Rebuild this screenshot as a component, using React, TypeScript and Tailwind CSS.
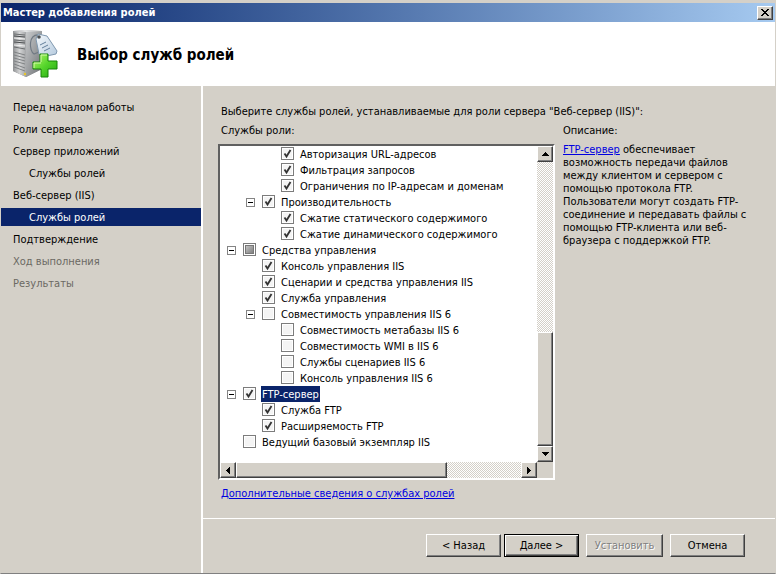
import { useState } from 'react';
import type { ReactNode } from 'react';
import clsx from 'clsx';

type CheckState = 'on' | 'off' | 'mixed';

interface Role {
  id: string;
  label: string;
  level: 0 | 1 | 2;
  state: CheckState;
  expandable?: boolean;
}

const steps = [
  { label: 'Перед началом работы' },
  { label: 'Роли сервера' },
  { label: 'Сервер приложений' },
  { label: 'Службы ролей', nested: true },
  { label: 'Веб-сервер (IIS)' },
  { label: 'Службы ролей', nested: true, current: true },
  { label: 'Подтверждение' },
  { label: 'Ход выполнения', disabled: true },
  { label: 'Результаты', disabled: true },
];

const initialRoles: Role[] = [
  { id: 'url-auth', label: 'Авторизация URL-адресов', level: 2, state: 'on' },
  { id: 'filtering', label: 'Фильтрация запросов', level: 2, state: 'on' },
  { id: 'ip-domains', label: 'Ограничения по IP-адресам и доменам', level: 2, state: 'on' },
  { id: 'performance', label: 'Производительность', level: 1, state: 'on', expandable: true },
  { id: 'static', label: 'Сжатие статического содержимого', level: 2, state: 'on' },
  { id: 'dynamic', label: 'Сжатие динамического содержимого', level: 2, state: 'on' },
  { id: 'tools', label: 'Средства управления', level: 0, state: 'mixed', expandable: true },
  { id: 'console', label: 'Консоль управления IIS', level: 1, state: 'on' },
  { id: 'scripts', label: 'Сценарии и средства управления IIS', level: 1, state: 'on' },
  { id: 'service', label: 'Служба управления', level: 1, state: 'on' },
  { id: 'compat', label: 'Совместимость управления IIS 6', level: 1, state: 'off', expandable: true },
  { id: 'metabase', label: 'Совместимость метабазы IIS 6', level: 2, state: 'off' },
  { id: 'wmi', label: 'Совместимость WMI в IIS 6', level: 2, state: 'off' },
  { id: 'scripts6', label: 'Службы сценариев IIS 6', level: 2, state: 'off' },
  { id: 'console6', label: 'Консоль управления IIS 6', level: 2, state: 'off' },
  { id: 'ftp', label: 'FTP-сервер', level: 0, state: 'on', expandable: true },
  { id: 'ftp-service', label: 'Служба FTP', level: 1, state: 'on' },
  { id: 'ftp-ext', label: 'Расширяемость FTP', level: 1, state: 'on' },
  { id: 'core', label: 'Ведущий базовый экземпляр IIS', level: 0, state: 'off' },
];

const indent = ['pl-[7px]', 'pl-[26px]', 'pl-[45px]'];

const raised =
  'border border-t-white border-l-white border-r-[#404040] border-b-[#404040] bg-[#d4d0c8] shadow-[inset_-1px_-1px_0_#808080]';
const dither = 'bg-[repeating-conic-gradient(#ffffff_0_25%,#d4d0c8_0_50%)] bg-[length:2px_2px]';

function ServerIcon() {
  return (
    <svg width="48" height="50" viewBox="0 0 48 50" aria-hidden="true">
      <defs>
        <linearGradient id="front" x1="0" x2="1">
          <stop offset="0" stopColor="#8d8f91" />
          <stop offset="0.5" stopColor="#d3d4d5" />
          <stop offset="1" stopColor="#a5a7a9" />
        </linearGradient>
        <linearGradient id="side" x1="0" x2="1" y2="1">
          <stop offset="0" stopColor="#c9cbcd" />
          <stop offset="1" stopColor="#6d7073" />
        </linearGradient>
        <linearGradient id="tag" x1="0" x2="1" y2="1">
          <stop offset="0" stopColor="#f6fafd" />
          <stop offset="1" stopColor="#b4c9dd" />
        </linearGradient>
        <linearGradient id="plus" y2="1" x2="1">
          <stop offset="0" stopColor="#b6f56a" />
          <stop offset="0.5" stopColor="#55d52b" />
          <stop offset="1" stopColor="#22a510" />
        </linearGradient>
      </defs>
      <path d="M0 2 L12 1 L29 2 L29 40 L13 48 L0 42 Z" fill="#8b8e90" />
      <path d="M0 2 L13 3 L13 48 L0 42 Z" fill="url(#front)" />
      <path d="M13 3 L29 2 L29 40 L13 48 Z" fill="url(#side)" />
      <path d="M0 2 L12 1 L29 2 L13 3 Z" fill="#e5e6e7" />
      <path d="M1 5 L12 6 M1 11 L12 12 M1 18 L12 20" stroke="#6a6d6f" />
      <path d="M1 7 L12 8 M1 13 L12 14" stroke="#4b4e50" />
      <path d="M1 16 L12 17 M1 9 L12 10" stroke="#f1f1f1" />
      <path d="M1 23 L12 26 M1 26 L12 29 M1 29 L12 32 M1 32 L12 35 M1 35 L12 39 M1 38 L12 42" stroke="#808385" />
      <circle cx="12" cy="45" r="1.2" fill="#e8c52c" />
      <path d="M26 6 C15 5 16 22 21 25 L26 23" fill="none" stroke="#717a84" strokeWidth="1.2" />
      <path d="M23 10 L25 5 L34 7 L44 22 L43 25 L29 28 L26 25 Z" fill="url(#tag)" stroke="#8098af" />
      <circle cx="26" cy="8" r="1.8" fill="#4c5054" />
      <path d="M27 16 L33 13 M29 19 L35 16 M31 22 L37 19" stroke="#637f9b" />
      <path d="M27 25 H35 V32 H44 V40 H35 V48 H28 V40 H20 V33 H27 Z" fill="url(#plus)" stroke="#178409" />
      <path d="M28 33 V26 H34 M21 39 V34 H28" fill="none" stroke="#d4fca9" />
    </svg>
  );
}

function Arrow({ dir }: { dir: 'up' | 'down' | 'left' | 'right' }) {
  const paths = {
    up: 'M0 4 H7 V3 H6 V2 H5 V1 H4 V0 H3 V1 H2 V2 H1 V3 H0 Z',
    down: 'M0 0 H7 V1 H6 V2 H5 V3 H4 V4 H3 V3 H2 V2 H1 V1 H0 Z',
    left: 'M4 0 V7 H3 V6 H2 V5 H1 V4 H0 V3 H1 V2 H2 V1 H3 V0 Z',
    right: 'M0 0 V7 H1 V6 H2 V5 H3 V4 H4 V3 H3 V2 H2 V1 H1 V0 Z',
  };
  const vertical = dir === 'up' || dir === 'down';
  return (
    <svg width={vertical ? 7 : 4} height={vertical ? 4 : 7} shapeRendering="crispEdges" aria-hidden="true">
      <path d={paths[dir]} fill="#000" />
    </svg>
  );
}

function ScrollButton({ dir, label }: { dir: 'up' | 'down' | 'left' | 'right'; label: string }) {
  return (
    <button type="button" aria-label={label} className={clsx('flex size-4 shrink-0 items-center justify-center', raised)}>
      <Arrow dir={dir} />
    </button>
  );
}

function CheckBox({ role, onToggle }: { role: Role; onToggle: () => void }) {
  return (
    <span className="relative mt-px mr-[5px] size-[13px] shrink-0">
      <input
        id={role.id}
        type="checkbox"
        checked={role.state === 'on'}
        onChange={onToggle}
        ref={(el) => {
          if (el) el.indeterminate = role.state === 'mixed';
        }}
        className="block size-[13px] appearance-none border border-[#7c7c7c] bg-[#f4f4f4] shadow-[inset_0_0_0_1px_#ffffff]"
      />
      {role.state === 'on' && (
        <svg className="pointer-events-none absolute inset-0" width="13" height="13" aria-hidden="true">
          <path d="M3.5 6.5 L5.5 9.5 L9.5 3" fill="none" stroke="#333" strokeWidth="1.8" />
        </svg>
      )}
      {role.state === 'mixed' && (
        <span className="pointer-events-none absolute inset-0.5 border border-[#777] bg-gradient-to-br from-[#c4c4c4] to-[#808080]" />
      )}
    </span>
  );
}

function RoleRow({ role, selected, onToggle }: { role: Role; selected: boolean; onToggle: () => void }) {
  return (
    <li className={clsx('flex h-4 items-start', indent[role.level])}>
      <span className="mt-1 mr-[7px] size-[9px] shrink-0">
        {role.expandable && (
          <button
            type="button"
            aria-label="Свернуть"
            className="flex size-[9px] items-center justify-center border border-[#848484] bg-white"
          >
            <span className="h-px w-[5px] bg-black" />
          </button>
        )}
      </span>
      <CheckBox role={role} onToggle={onToggle} />
      <label
        htmlFor={role.id}
        className={clsx('h-4 px-px leading-[17px] whitespace-nowrap', selected && 'bg-[#0a246a] text-white')}
      >
        {role.label}
      </label>
    </li>
  );
}

interface DialogButtonProps {
  children: ReactNode;
  primary?: boolean;
  disabled?: boolean;
  className?: string;
}

function DialogButton({ children, primary, disabled, className }: DialogButtonProps) {
  return (
    <button
      type="button"
      disabled={disabled}
      className={clsx(
        'h-[23px] border bg-[#d4d0c8] pt-0.5',
        primary
          ? 'border-black shadow-[inset_1px_1px_0_#ffffff,inset_-1px_-1px_0_#404040,inset_-2px_-2px_0_#808080]'
          : 'border-t-white border-l-white border-r-[#404040] border-b-[#404040] shadow-[inset_-1px_-1px_0_#808080]',
        disabled && 'text-[#808080] [text-shadow:1px_1px_0_#ffffff]',
        className,
      )}
    >
      {children}
    </button>
  );
}

export default function App() {
  const [roles, setRoles] = useState(initialRoles);

  const toggle = (id: string) =>
    setRoles((prev) => prev.map((r) => (r.id === id ? { ...r, state: r.state === 'on' ? 'off' : 'on' } : r)));

  return (
    <div className="flex min-h-screen flex-col border-x border-b border-t-3 border-x-[#d4d0c8] border-t-[#d4d0c8] border-b-[#808080] bg-[#d4d0c8] font-['DejaVu_Sans_Condensed','DejaVu_Sans',sans-serif] text-[11px] text-black">
      <div className="flex h-[19px] items-center justify-between bg-gradient-to-r from-[#0a246a] to-[#a6caf0] pr-0.5 pl-0.5">
        <span className="pt-0.5 font-bold text-white">Мастер добавления ролей</span>
        <button type="button" aria-label="Закрыть" className={clsx('flex h-3.5 w-4 items-center justify-center', raised)}>
          <svg width="8" height="7" shapeRendering="crispEdges" aria-hidden="true">
            <path
              d="M0 0h2v1h1v1h2v-1h1v-1h2v1h-1v1h-1v1h-1v1h1v1h1v1h1v1h-2v-1h-1v-1h-2v1h-1v1h-2v-1h1v-1h1v-1h1v-1h-1v-1h-1v-1h-1z"
              fill="#000"
            />
          </svg>
        </button>
      </div>

      <header className="flex h-16 items-center gap-4 bg-white pl-3">
        <ServerIcon />
        <h1 className="pt-0.5 text-[15px] font-bold">Выбор служб ролей</h1>
      </header>

      <div className="flex flex-1">
        <nav className="w-[202px] shrink-0 border-r-2 border-white pt-2.5">
          <ul>
            {steps.map((step, i) => (
              <li key={i} className="py-0.5">
                <a
                  href="#"
                  aria-current={step.current ? 'step' : undefined}
                  className={clsx(
                    'block h-[18px] leading-5',
                    step.nested ? 'pl-7' : 'pl-3',
                    step.current && 'bg-[#0a246a] text-white',
                    step.disabled && 'text-[#6b6963]',
                  )}
                >
                  {step.label}
                </a>
              </li>
            ))}
          </ul>
        </nav>

        <div className="flex min-w-0 flex-1 flex-col">
          <main className="flex flex-1 flex-col pt-[18px] pr-7 pl-[15px]">
            <p className="pl-[3px] leading-4">
              Выберите службы ролей, устанавливаемые для роли сервера "Веб-сервер (IIS)":
            </p>
            <div className="mt-[3px] flex gap-2">
              <section className="min-w-0 flex-1">
                <h2 className="pl-[3px] leading-4">Службы роли:</h2>
                <div className="mt-[5px] border-2 border-t-[#606060] border-r-white border-b-white border-l-[#606060] bg-white">
                  <div className="flex">
                    <ul className="min-w-0 flex-1 overflow-hidden pb-3">
                      {roles.map((role) => (
                        <RoleRow key={role.id} role={role} selected={role.id === 'ftp'} onToggle={() => toggle(role.id)} />
                      ))}
                    </ul>
                    <div className={clsx('flex w-4 shrink-0 flex-col', dither)}>
                      <ScrollButton dir="up" label="Вверх" />
                      <div className="flex flex-1 flex-col justify-end">
                        <div className={clsx('h-2/5', raised)} />
                      </div>
                      <ScrollButton dir="down" label="Вниз" />
                    </div>
                  </div>
                  <div className="flex">
                    <div className={clsx('flex min-w-0 flex-1', dither)}>
                      <ScrollButton dir="left" label="Влево" />
                      <div className="flex flex-1">
                        <div className={clsx('w-[74%]', raised)} />
                      </div>
                      <ScrollButton dir="right" label="Вправо" />
                    </div>
                    <div className="size-4 bg-[#d4d0c8]" />
                  </div>
                </div>
                <a href="#" className="mt-1.5 inline-block pl-[3px] leading-4 text-[#0000e0] underline">
                  Дополнительные сведения о службах ролей
                </a>
              </section>
              <aside className="w-[184px] shrink-0">
                <h2 className="leading-4">Описание:</h2>
                <p className="mt-1 leading-[13px]">
                  <a href="#" className="inline-block leading-[13px] text-[#0000e0] underline">
                    FTP-сервер
                  </a>{' '}
                  обеспечивает возможность передачи файлов между клиентом и сервером с помощью протокола FTP.
                  Пользователи могут создать FTP-соединение и передавать файлы с помощью FTP-клиента или веб-браузера с
                  поддержкой FTP.
                </p>
              </aside>
            </div>
          </main>

          <footer className="flex justify-end border-t border-white pt-[15px] pr-[30px] pb-4">
            <DialogButton className="w-[75px]">&lt; Назад</DialogButton>
            <DialogButton primary className="ml-[3px] w-[75px]">
              Далее &gt;
            </DialogButton>
            <DialogButton disabled className="ml-[7px] w-[77px]">
              Установить
            </DialogButton>
            <DialogButton className="ml-[7px] w-[75px]">Отмена</DialogButton>
          </footer>
        </div>
      </div>
    </div>
  );
}
